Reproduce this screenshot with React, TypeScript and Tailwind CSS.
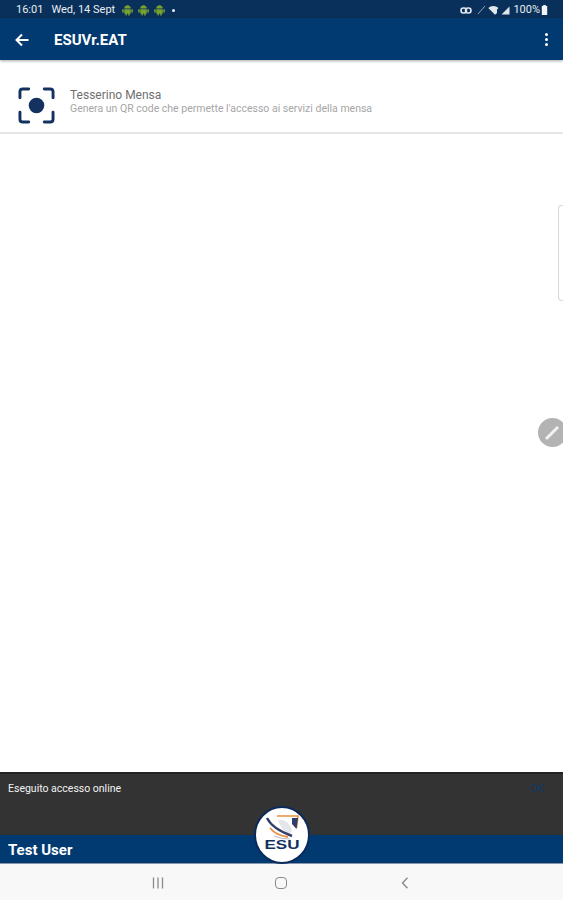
const AndroidDot = () => (
    <svg width="11" height="12" viewBox="0 0 11 12" fill="#76a12f">
        <path d="M2.2 4.6 C2.2 2.6 3.7 1.2 5.5 1.2 C7.3 1.2 8.8 2.6 8.8 4.6 Z" />
        <rect x="2.2" y="5.2" width="6.6" height="4.6" rx="0.8" />
        <rect x="0.2" y="5" width="1.5" height="3.8" rx="0.7" />
        <rect x="9.3" y="5" width="1.5" height="3.8" rx="0.7" />
        <rect x="3.4" y="9" width="1.5" height="2.6" rx="0.7" />
        <rect x="6.1" y="9" width="1.5" height="2.6" rx="0.7" />
    </svg>
)

const StatusBar = () => (
    <div className="h-[18px] bg-[#08305a] flex items-center justify-between pl-4 pr-[15px] pt-[2px] text-[11px] text-[#e8edf2]">
        <div className="flex items-center">
            <span>16:01</span>
            <span className="ml-[8px]">Wed, 14 Sept</span>
            <div className="flex items-center gap-[5px] ml-[7px]">
                <AndroidDot />
                <AndroidDot />
                <AndroidDot />
            </div>
            <div className="w-[3px] h-[3px] rounded-full bg-[#e8edf2] ml-[7px]" />
        </div>
        <div className="flex items-center">
            <svg width="12" height="7" viewBox="0 0 12 7" fill="none" stroke="#dfe6ec" strokeWidth="1.6">
                <rect x="1" y="1" width="5.5" height="5" rx="2.4" />
                <rect x="5.5" y="1" width="5.5" height="5" rx="2.4" />
            </svg>
            <svg width="9" height="10" viewBox="0 0 9 10" className="ml-[5px]" stroke="#8fa3b8" strokeWidth="1">
                <path d="M1 9 L8 1" />
            </svg>
            <svg width="11" height="10" viewBox="0 0 11 10" className="ml-[2px]" fill="#dfe6ec">
                <path d="M0.3 3 C3 0.2 7.5 0.2 10.5 3 L9 4.4 L9 8 L7 9.8 Z" />
            </svg>
            <svg width="9" height="9" viewBox="0 0 9 9" fill="#dfe6ec" className="ml-[2px]">
                <path d="M8.5 0.5 V8.5 H0.5 Z" />
            </svg>
            <span className="ml-[3px]">100%</span>
            <svg width="7" height="10" viewBox="0 0 7 10" fill="#f2f4f6" className="ml-[1px]">
                <path d="M2.2 0 H4.8 V1 H6.2 V10 H0.8 V1 H2.2 Z" />
            </svg>
        </div>
    </div>
)

const AppBar = () => (
    <header className="h-[42px] bg-[#003a70] shadow-[0_1px_3px_rgba(0,0,0,0.35)] flex items-center text-white pt-[1px]">
        <svg width="14" height="14" viewBox="0 0 14 14" fill="none" stroke="#ffffff" strokeWidth="2" className="ml-[15px]">
            <path d="M13.5 7 H2 M7 1.5 L1.5 7 L7 12.5" />
        </svg>
        <span className="ml-[25px] text-[15px] leading-[20px] font-bold">ESUVr.EAT</span>
        <div className="ml-auto mr-[15px] flex flex-col gap-[2px]">
            <div className="w-[3px] h-[3px] rounded-full bg-white" />
            <div className="w-[3px] h-[3px] rounded-full bg-white" />
            <div className="w-[3px] h-[3px] rounded-full bg-white" />
        </div>
    </header>
)

const ScanIcon = () => (
    <svg width="37" height="37" viewBox="0 0 38 38" fill="none" stroke="#14315f" strokeWidth="3" strokeLinecap="round">
        <path d="M2 11 V5 Q2 2 5 2 H11" />
        <path d="M27 2 H33 Q36 2 36 5 V11" />
        <path d="M2 26 V33 Q2 36 5 36 H11" />
        <path d="M27 36 H33 Q36 36 36 33 V26" />
        <circle cx="19" cy="19" r="8" fill="#14315f" stroke="none" />
    </svg>
)

const EsuLogo = () => (
    <svg width="56" height="58" viewBox="0 0 56 58">
        <ellipse cx="28" cy="29" rx="27" ry="28" fill="#ffffff" stroke="#0b2a5c" strokeWidth="2" />
        <path d="M23 10 H44 L42.5 22" fill="none" stroke="#e8903f" strokeWidth="1.6" />
        <path d="M38 12 H44 L42.5 23 L38 18 Z" fill="#2d3f70" />
        <path d="M24 14 C30 13 36 17 38 24 L35 31 C30 26 26 20 24 14 Z" fill="#e4e6ec" />
        <path d="M13 12 C17 20 27 26 38 30" fill="none" stroke="#33406b" strokeWidth="2.4" />
        <path d="M16 22 C20 27 27 30 34 31" fill="none" stroke="#e8903f" strokeWidth="1.8" />
        <path d="M20 30 C25 32 30 33 36 33" fill="none" stroke="#b9bfcd" strokeWidth="1.2" />
        <text
            x="28"
            y="43"
            textAnchor="middle"
            fontSize="13"
            fontWeight="700"
            fill="#12305f"
            fontFamily="'Liberation Sans', sans-serif"
            textLength="35"
            lengthAdjust="spacingAndGlyphs"
        >
            ESU
        </text>
    </svg>
)

const NavBar = () => (
    <div className="h-9 bg-[#f8f8f8] grid grid-cols-3 items-center justify-items-center px-[96px] pt-[2px]">
        <svg width="12" height="12" viewBox="0 0 12 12" stroke="#8a8a8a" strokeWidth="1.3">
            <path d="M1.5 0.5 V11.5 M6 0.5 V11.5 M10.5 0.5 V11.5" />
        </svg>
        <div className="w-[12px] h-[12px] rounded-[4px] border-[1.5px] border-[#8a8a8a]" />
        <svg width="8" height="12" viewBox="0 0 8 12" fill="none" stroke="#8a8a8a" strokeWidth="1.4">
            <path d="M6.5 0.8 L1.5 6 L6.5 11.2" />
        </svg>
    </div>
)

export default function App() {
    return (
        <div className="relative w-[563px] h-[900px] overflow-hidden bg-white flex flex-col font-['Roboto','Liberation_Sans',sans-serif]">
            <StatusBar />
            <AppBar />
            <div className="flex items-center h-[74px] pt-[19px] border-b-2 border-[#e6e6e6]">
                <div className="ml-[18px]">
                    <ScanIcon />
                </div>
                <div className="ml-[15px] mb-[7px] flex flex-col">
                    <span className="text-[12px] leading-[14px] text-[#6f6f6f]">Tesserino Mensa</span>
                    <span className="text-[10.5px] leading-[14px] text-[#a6a6a6]">
                        Genera un QR code che permette l'accesso ai servizi della mensa
                    </span>
                </div>
            </div>
            <main className="flex-1" />
            <div className="h-[63px] bg-[#333333] border-t-2 border-[#222222] flex items-start justify-between pl-2 pr-[19px] pt-[7px] text-[10.5px]">
                <span className="text-[#f2f2f2]">Eseguito accesso online</span>
                <span className="text-[#0f3a66]">OK</span>
            </div>
            <div className="h-[29px] bg-[#003a70] border-b border-[#8796ad] flex items-center pl-2 pt-[3px]">
                <span className="text-[15px] font-bold text-white">Test User</span>
            </div>
            <NavBar />

            <div className="absolute left-[254px] top-[806px]">
                <EsuLogo />
            </div>
            <div className="absolute right-0 top-[205px] w-[5px] h-[96px] bg-white border-y border-l border-[#d8d8d8] rounded-l-[4px]" />
            <div className="absolute left-[538px] top-[418px] w-[29px] h-[29px] rounded-full bg-[#b3b3b3] flex items-center justify-center">
                <svg width="29" height="29" viewBox="0 0 29 29" fill="none" stroke="#f2f2f2" strokeWidth="3">
                    <path d="M8 21 L20 9" />
                </svg>
            </div>
        </div>
    )
}
